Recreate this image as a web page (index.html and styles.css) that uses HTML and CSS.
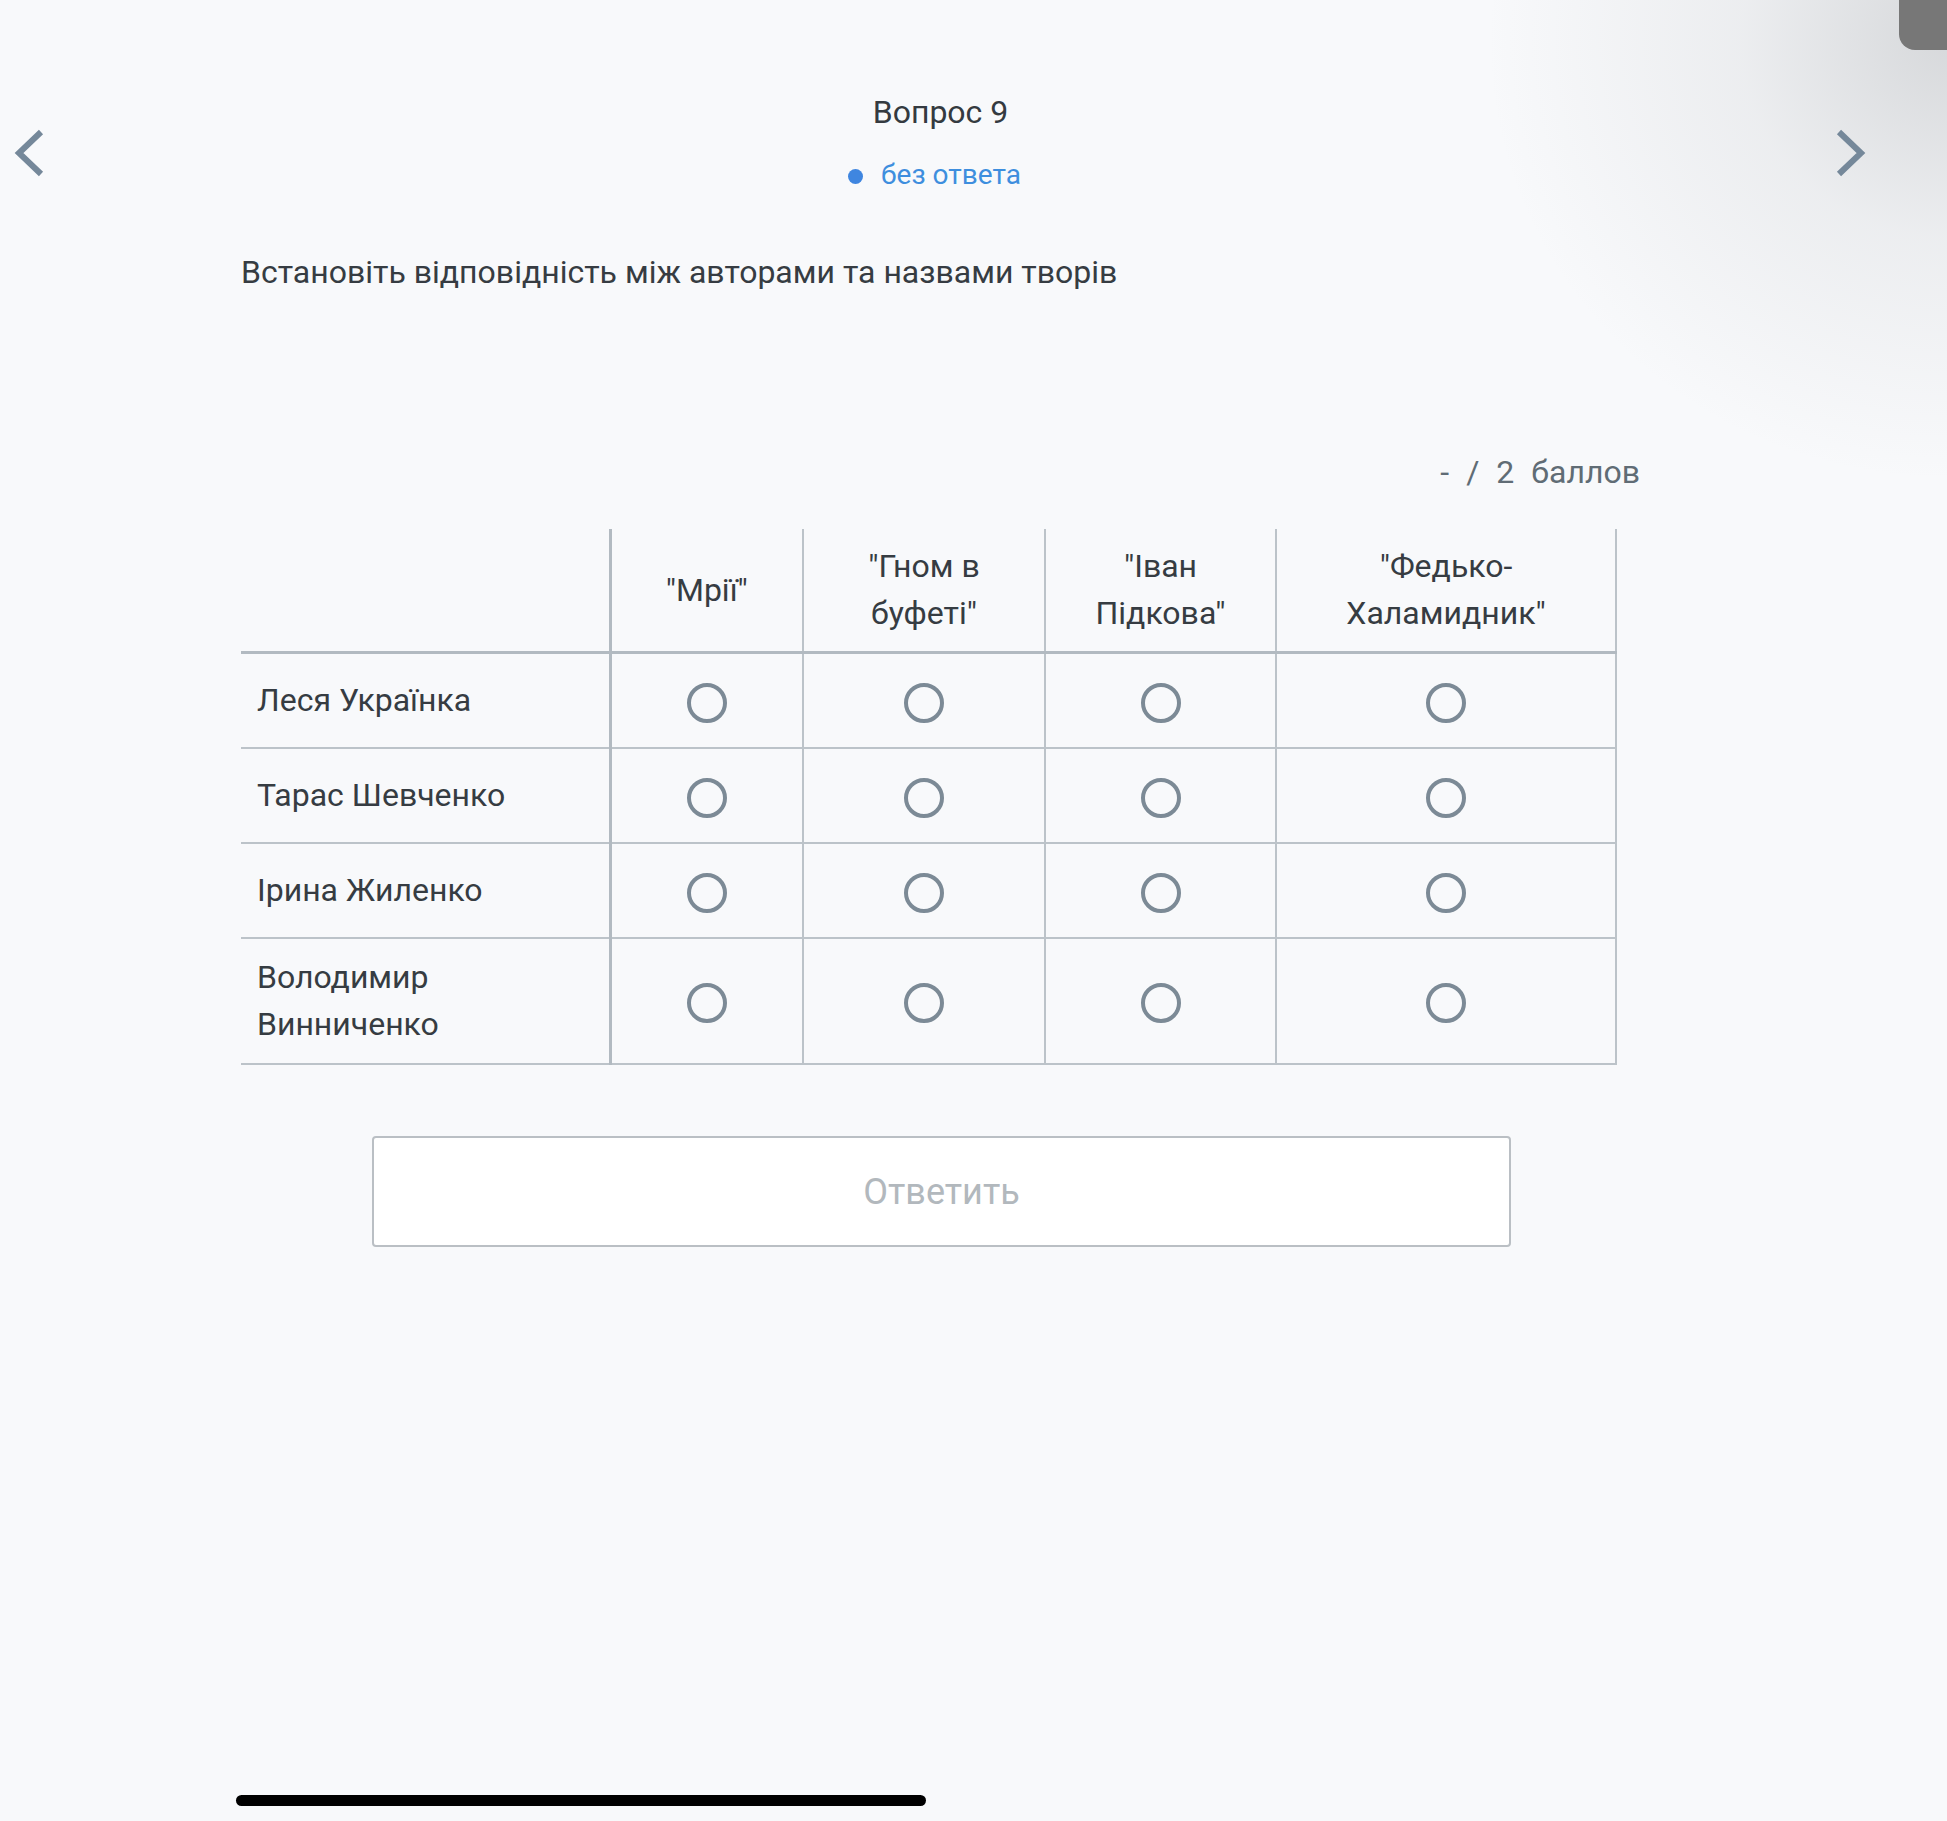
FILE: index.html
```html
<!DOCTYPE html>
<html lang="ru">
<head>
<meta charset="utf-8">
<title>Вопрос 9</title>
<link rel="stylesheet" href="styles.css">
</head>
<body>
<div class="screen">
  <div class="corner-shade"></div>
  <div class="corner-tab"></div>

  <header class="topbar">
    <div class="nav nav-prev">
      <svg class="chev" viewBox="0 0 34 48" width="34" height="48"><path d="M29 3 L7 24 L29 45" fill="none" stroke="#75889a" stroke-width="6"/></svg>
    </div>
    <div class="title-col">
      <div class="q-title">Вопрос 9</div>
      <div class="q-status"><span class="dot"></span><span>без ответа</span></div>
    </div>
    <div class="nav nav-next">
      <svg class="chev" viewBox="0 0 34 48" width="34" height="48"><path d="M5 3 L27 24 L5 45" fill="none" stroke="#75889a" stroke-width="6"/></svg>
    </div>
  </header>

  <main class="content">
    <p class="question">Встановіть відповідність між авторами та назвами творів</p>

    <div class="score"><span>-</span><span>/</span><span>2</span><span>баллов</span></div>

    <table class="grid">
      <colgroup>
        <col class="c-name"><col class="c1"><col class="c2"><col class="c3"><col class="c4">
      </colgroup>
      <thead>
        <tr>
          <th class="corner"></th>
          <th>"Мрії"</th>
          <th>"Гном в<br>буфеті"</th>
          <th>"Іван<br>Підкова"</th>
          <th>"Федько-<br>Халамидник"</th>
        </tr>
      </thead>
      <tbody>
        <tr>
          <td class="name">Леся Українка</td>
          <td><span class="radio"></span></td><td><span class="radio"></span></td><td><span class="radio"></span></td><td><span class="radio"></span></td>
        </tr>
        <tr>
          <td class="name">Тарас Шевченко</td>
          <td><span class="radio"></span></td><td><span class="radio"></span></td><td><span class="radio"></span></td><td><span class="radio"></span></td>
        </tr>
        <tr>
          <td class="name">Ірина Жиленко</td>
          <td><span class="radio"></span></td><td><span class="radio"></span></td><td><span class="radio"></span></td><td><span class="radio"></span></td>
        </tr>
        <tr class="tall">
          <td class="name">Володимир<br>Винниченко</td>
          <td><span class="radio"></span></td><td><span class="radio"></span></td><td><span class="radio"></span></td><td><span class="radio"></span></td>
        </tr>
      </tbody>
    </table>

    <div class="actions">
      <button class="answer" type="button">Ответить</button>
    </div>
  </main>

  <div class="home-bar"></div>
</div>
</body>
</html>
```

FILE: styles.css
```css
html, body {
  margin: 0;
  padding: 0;
}
body {
  background: #f8f9fb;
  font-family: Roboto, "Noto Sans", "Liberation Sans", sans-serif;
  color: #363c42;
}
.screen {
  position: relative;
  width: 1947px;
  height: 1821px;
  overflow: hidden;
}
.corner-shade {
  position: absolute;
  top: 0;
  right: 0;
  width: 560px;
  height: 520px;
  background: radial-gradient(ellipse 460px 440px at 100% 40px, rgba(120,124,128,0.26) 0%, rgba(150,154,158,0.12) 45%, rgba(248,249,251,0) 100%);
  pointer-events: none;
}
.corner-tab {
  position: absolute;
  top: 0;
  right: 0;
  width: 48px;
  height: 50px;
  background: #777777;
  border-bottom-left-radius: 16px;
}
.topbar {
  display: flex;
  align-items: flex-start;
  padding-top: 93px;
  position: relative;
}
.nav {
  width: 241px;
  display: flex;
  padding-top: 36px;
}
.nav-prev {
  padding-left: 12px;
  box-sizing: border-box;
}
.nav-next {
  width: 307px;
  justify-content: flex-end;
  padding-right: 79px;
  box-sizing: border-box;
}
.chev {
  display: block;
}
.title-col {
  flex: 1;
  display: flex;
  flex-direction: column;
  align-items: center;
}
.q-title {
  font-size: 32px;
  line-height: 38px;
  color: #343a40;
}
.q-status {
  margin-top: 27px;
  display: flex;
  align-items: center;
  gap: 18px;
  font-size: 28px;
  line-height: 34px;
  color: #3e8ede;
  margin-left: -12px;
}
.dot {
  width: 15px;
  height: 15px;
  border-radius: 50%;
  background: #3f86e0;
  margin-top: 2px;
}
.content {
  margin-left: 241px;
  width: 1399px;
}
.question {
  margin: 61px 0 0;
  font-size: 32px;
  line-height: 38px;
  color: #363c42;
}
.score {
  margin-top: 162px;
  display: flex;
  justify-content: flex-end;
  gap: 17px;
  font-size: 32px;
  line-height: 38px;
  color: #606c75;
}
.grid {
  margin-top: 38px;
  border-collapse: collapse;
  table-layout: fixed;
  width: 1375px;
  font-size: 32px;
  line-height: 47px;
  color: #363c42;
}
.c-name { width: 369px; }
.c1 { width: 193px; }
.c2 { width: 242px; }
.c3 { width: 231px; }
.c4 { width: 340px; }
.grid th {
  font-weight: 400;
  height: 122px;
  padding: 0;
  text-align: center;
  vertical-align: middle;
  border-left: 2px solid #bcc3c9;
  border-right: 2px solid #bcc3c9;
  border-bottom: 3px solid #b2bac1;
}
.grid th.corner {
  border-left: none;
  border-right: 3px solid #b2bac1;
}
.grid td {
  height: 93px;
  padding: 0;
  text-align: center;
  vertical-align: middle;
  border: 2px solid #bcc3c9;
}
.grid td.name {
  text-align: left;
  padding-left: 16px;
  border-left: none;
  border-right: 3px solid #b2bac1;
}
.grid tr.tall td {
  height: 124px;
}
.radio {
  display: inline-block;
  vertical-align: middle;
  width: 40px;
  height: 40px;
  border: 4px solid #7c8a96;
  border-radius: 50%;
  box-sizing: border-box;
}
.actions {
  margin-top: 71px;
  display: flex;
  justify-content: center;
  padding-left: 2px;
}
.answer {
  width: 1139px;
  height: 111px;
  background: #ffffff;
  border: 2px solid #babfc4;
  border-radius: 4px;
  font-family: Roboto, "Noto Sans", sans-serif;
  font-size: 36px;
  color: #b2b8bd;
  padding: 0;
}
.home-bar {
  position: absolute;
  left: 236px;
  top: 1795px;
  width: 690px;
  height: 11px;
  border-radius: 6px;
  background: #000;
}
```
